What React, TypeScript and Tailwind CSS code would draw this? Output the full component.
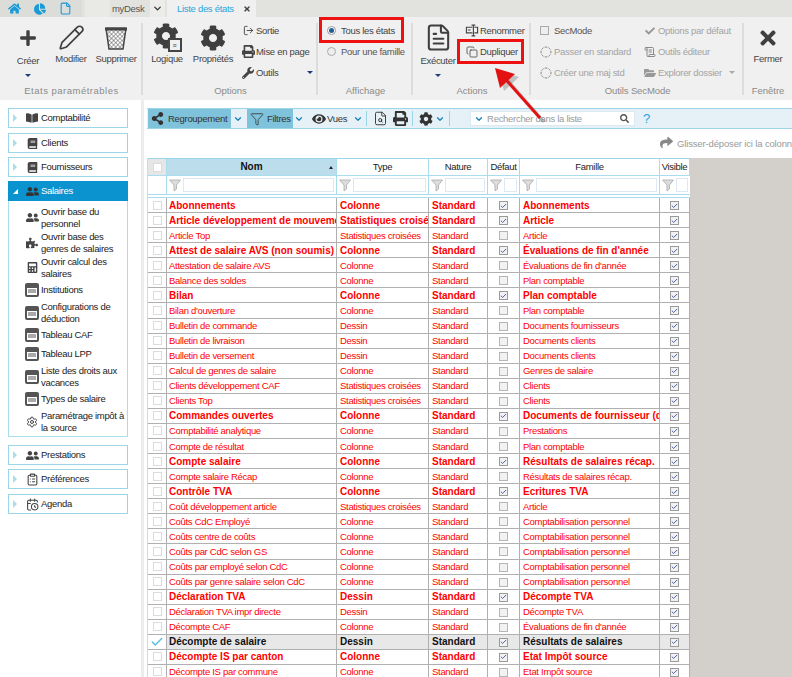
import React from "react";
import { FaHome, FaChartPie, FaPlus, FaCog, FaPrint, FaWrench, FaCheck, FaFolderOpen, FaTimes, FaBookOpen, FaBook, FaUserFriends, FaPuzzlePiece, FaCalculator, FaEye, FaSearch, FaShareAlt, FaShare } from "react-icons/fa";
import { File, Pencil, FileText, Copy, CircleDashed, ScrollText, LogOut, ClipboardList, CalendarClock, ChevronDown, Filter, FileSearch, Check, Settings } from "lucide-react";

type Row = [string, string, boolean, string, boolean?];
const C = "Colonne", D = "Dessin", S = "Statistiques croisées";
const rows: Row[] = [
  ["Abonnements", C, true, "Abonnements"],
  ["Article développement de mouvements", S, true, "Article"],
  ["Article Top", S, false, "Article"],
  ["Attest de salaire AVS (non soumis)", C, true, "Évaluations de fin d'année"],
  ["Attestation de salaire AVS", C, false, "Évaluations de fin d'année"],
  ["Balance des soldes", C, false, "Plan comptable"],
  ["Bilan", C, true, "Plan comptable"],
  ["Bilan d'ouverture", C, false, "Plan comptable"],
  ["Bulletin de commande", D, false, "Documents fournisseurs"],
  ["Bulletin de livraison", D, false, "Documents clients"],
  ["Bulletin de versement", D, false, "Documents clients"],
  ["Calcul de genres de salaire", C, false, "Genres de salaire"],
  ["Clients développement CAF", S, false, "Clients"],
  ["Clients Top", S, false, "Clients"],
  ["Commandes ouvertes", C, true, "Documents de fournisseur (divers)"],
  ["Comptabilité analytique", C, false, "Prestations"],
  ["Compte de résultat", C, false, "Plan comptable"],
  ["Compte salaire", C, true, "Résultats de salaires récap."],
  ["Compte salaire Récap", C, false, "Résultats de salaires récap."],
  ["Contrôle TVA", C, true, "Ecritures TVA"],
  ["Coût développement article", S, false, "Article"],
  ["Coûts CdC Employé", C, false, "Comptabilisation personnel"],
  ["Coûts centre de coûts", C, false, "Comptabilisation personnel"],
  ["Coûts par CdC selon GS", C, false, "Comptabilisation personnel"],
  ["Coûts par employé selon CdC", C, false, "Comptabilisation personnel"],
  ["Coûts par genre salaire selon CdC", C, false, "Comptabilisation personnel"],
  ["Déclaration TVA", D, true, "Décompte TVA"],
  ["Déclaration TVA impr directe", D, false, "Décompte TVA"],
  ["Décompte CAF", C, false, "Évaluations de fin d'année"],
  ["Décompte de salaire", D, true, "Résultats de salaires", true],
  ["Décompte IS par canton", C, true, "Etat Impôt source"],
  ["Décompte IS par commune", C, false, "Etat Impôt source"],
];

function Caret({ color = "border-t-[#1f3a7a]" }: { color?: string }) {
  return <span className={`inline-block w-0 h-0 border-l-[3.5px] border-r-[3.5px] border-t-[3.5px] border-l-transparent border-r-transparent ${color}`} />;
}

function Big({ w, icon, label, caret }: { w: string; icon: React.ReactNode; label: string; caret?: boolean }) {
  return (
    <div className={`${w} flex flex-col items-center shrink-0 pt-[6px]`}>
      <div className="h-[29px] flex items-center justify-center text-[#3f3f3f]">{icon}</div>
      <div className={`${caret ? "mt-[2px]" : "mt-0"} h-[13px] leading-[13px] whitespace-nowrap text-[#444]`}>{label}</div>
      {caret && <div className="mt-[7px] leading-[0] flex"><Caret /></div>}
    </div>
  );
}

function Small({ icon, label, grey, right }: { icon: React.ReactNode; label: string; grey?: boolean; right?: React.ReactNode }) {
  return (
    <div className={`h-[21px] flex items-center whitespace-nowrap ${grey ? "text-[#a3a3a3]" : "text-[#444]"}`}>
      <span className="w-[14px] mr-px flex justify-center shrink-0">{icon}</span>
      <span>{label}</span>
      {right}
    </div>
  );
}

function Group({ w, title, children, last, titleCls = "" }: { w: string; title: string; children: React.ReactNode; last?: boolean; titleCls?: string }) {
  return (
    <div className={`${w} shrink-0 flex flex-col relative`}>
      <div className="h-[66px] flex">{children}</div>
      <div className={`text-center text-[#8a8a8a] h-[15px] leading-[15px] ${titleCls}`}>{title}</div>
      {!last && <div className="absolute right-0 top-[6px] bottom-[5px] w-[2px] bg-[#dcdcdc]" />}
    </div>
  );
}

function Trash() {
  return (
    <svg width="26" height="26" viewBox="0 0 26 26">
      <defs>
        <pattern id="mesh" width="3" height="3" patternUnits="userSpaceOnUse" patternTransform="rotate(45)">
          <rect width="3" height="3" fill="#fff" />
          <path d="M0 0H3M0 0V3" stroke="#555" strokeWidth="1" />
        </pattern>
      </defs>
      <path d="M3 3h20l-3 21H6z" fill="url(#mesh)" stroke="#444" strokeWidth="1.5" />
      <path d="M2 3h22v2.5H2z" fill="#444" />
    </svg>
  );
}

function Logic() {
  return (
    <span className="relative block w-[29px] h-[29px]">
      <FaCog size={26} className="absolute left-0 top-0" />
      <span className="absolute right-0 bottom-0 w-[14px] h-[14px] bg-[#f0f0f0] border-2 border-[#444] flex items-center justify-center text-[7px] leading-none font-bold">≡</span>
    </span>
  );
}

function Rename() {
  return (
    <svg width="15" height="13" viewBox="0 0 15 13" fill="none" stroke="#444" strokeWidth="1.2">
      <path d="M8 3H1.5v6H8M10 3h3.5v6H10" />
      <path d="M3 6h3M9 1v11M7 .8h4M7 12.2h4" />
    </svg>
  );
}

function Box({ checked, faint }: { checked?: boolean; faint?: boolean }) {
  return (
    <span className={`w-[9px] h-[9px] border flex items-center justify-center shrink-0 ${checked ? "border-[#9a9a9a] bg-[#f2f2f2]" : faint ? "border-[#dcdcdc] bg-white" : "border-[#b5b5b5] bg-[#f2f2f2]"}`}>
      {checked && <Check size={8} strokeWidth={3} className="text-[#3b4d9e]" />}
    </span>
  );
}

function WinIcon() {
  return (
    <span className="w-[14px] h-[14px] border-2 border-[#555] rounded-[2px] bg-white flex flex-col">
      <span className="h-[3px] bg-[#555]" />
      <span className="mt-px mx-px h-[4px] bg-[#aaa]" />
    </span>
  );
}

function NavHead({ label, icon, cls = "" }: { label: string; icon: React.ReactNode; cls?: string }) {
  return (
    <div className={`h-[20px] border border-[#9ad6e8] bg-white flex items-center text-[#222] ${cls}`}>
      <span className="ml-[4px] w-0 h-0 border-y-[4px] border-y-transparent border-l-[4px] border-l-[#a9dcec]" />
      <span className="ml-[7px] w-[16px] flex justify-center text-[#444]">{icon}</span>
      <span className="ml-px">{label}</span>
    </div>
  );
}

function NavItem({ h, icon, label }: { h: string; icon: React.ReactNode; label: React.ReactNode }) {
  return (
    <div className={`${h} flex items-center text-[#222] pl-[14px]`}>
      <span className="w-[18px] flex justify-center text-[#444] shrink-0">{icon}</span>
      <span className="leading-[11.5px] whitespace-nowrap">{label}</span>
    </div>
  );
}

function ColFilter({ w, last }: { w: string; last?: boolean }) {
  return (
    <div className={`${w} shrink-0 flex items-center px-[2px] ${last ? "" : "border-r border-[#a9dcec]"}`}>
      <svg width="13" height="13" viewBox="0 0 13 13" className="shrink-0">
        <path d="M.5 1h11L7.5 6v4L5 12V6z" fill="#ddd" stroke="#aaa" strokeWidth=".8" />
      </svg>
      <span className="ml-px flex-1 min-w-0 h-[14px] border border-[#dce9f5] bg-white" />
    </div>
  );
}

function Head({ w, label, active }: { w: string; label: string; active?: boolean }) {
  return (
    <div className={`${w} shrink-0 flex items-center justify-center relative border-r border-[#a9dcec] ${active ? "bg-[#bcdeec] font-bold text-[#111] text-[10px] tracking-normal" : "bg-white text-[#222]"}`}>
      {label}
      {active && <span className="absolute right-[3px] top-[7px] w-0 h-0 border-x-[2.5px] border-x-transparent border-b-[3px] border-b-[#222]" />}
    </div>
  );
}

const cell = "shrink-0 overflow-hidden whitespace-nowrap border-r border-[#b0b0b0] flex items-center";

function ToolDrop() {
  return <ChevronDown size={10} strokeWidth={3} className="text-[#1583b8]" />;
}

export default function App() {
  return (
    <div className="w-[792px] h-[677px] overflow-hidden relative bg-white text-[9.5px] tracking-[-0.3px] leading-[12px]" style={{ fontFamily: '"Liberation Sans", Arial, sans-serif' }}>
      {/* Onglets */}
      <div className="h-[17px] bg-[#e2e2de] flex items-center">
        <div className="w-[82px] h-full flex items-center bg-[#dcdcd8]">
          <FaHome size={13} className="ml-[8px] text-[#1a9ad6]" />
          <FaChartPie size={12} className="ml-[13px] text-[#1a9ad6]" />
          <File size={13} className="ml-[13px] text-[#1a9ad6]" strokeWidth={2} />
        </div>
        <div className="w-[25px] h-full bg-[#e9e9e6] ml-[3px]" />
        <div className="w-[40px] h-full flex items-center pl-[2px] text-[#555] whitespace-nowrap">myDesk</div>
        <div className="w-[15px] h-full bg-[#ececea] flex items-center justify-center"><ChevronDown size={11} strokeWidth={3} className="text-[#333]" /></div>
        <div className="ml-[2px] w-[89px] h-full bg-[#f0f0f0] flex items-center pl-[10px] text-[#2aa5dc] whitespace-nowrap">
          Liste des états
          <FaTimes size={8} className="ml-auto mr-[5px] text-[#444]" />
        </div>
      </div>

      {/* Ruban */}
      <div className="h-[83px] bg-[#f0f0f0] flex">
        <Group w="w-[143px]" title="Etats paramétrables" titleCls="tracking-[0.5px]">
          <div className="w-[6px]" />
          <Big w="w-[44px]" icon={<FaPlus size={18} />} label="Créer" caret />
          <Big w="w-[42px]" icon={<Pencil size={27} strokeWidth={1.5} />} label="Modifier" />
          <Big w="w-[48px]" icon={<Trash />} label="Supprimer" />
        </Group>
        <Group w="w-[175px]" title="Options" titleCls="tracking-normal">
          <Big w="w-[48px]" icon={<Logic />} label="Logique" />
          <Big w="w-[44px]" icon={<FaCog size={26} />} label="Propriétés" />
          <div className="ml-[6px] pt-[3px] flex flex-col w-[72px] shrink-0">
            <Small icon={<LogOut size={11} strokeWidth={2} />} label="Sortie" />
            <Small icon={<FaPrint size={13} />} label="Mise en page" />
            <Small icon={<FaWrench size={12} />} label="Outils" right={<span className="ml-auto flex"><Caret /></span>} />
          </div>
        </Group>
        <Group w="w-[95px]" title="Affichage" titleCls="tracking-normal">
          <div className="pl-[9px] pt-[3px] flex flex-col">
            <div className="h-[21px] flex items-center text-[#444] whitespace-nowrap">
              <span className="w-[9px] h-[9px] rounded-full border border-[#999] bg-white flex items-center justify-center mr-[5px]"><span className="w-[5px] h-[5px] rounded-full bg-[#1f5f99]" /></span>
              Tous les états
            </div>
            <div className="h-[21px] flex items-center text-[#555] whitespace-nowrap">
              <span className="w-[9px] h-[9px] rounded-full border border-[#aaa] bg-[#eee] mr-[5px]" />
              Pour une famille
            </div>
          </div>
        </Group>
        <Group w="w-[118px]" title="Actions" titleCls="tracking-normal">
          <Big w="w-[50px]" icon={<FileText size={29} strokeWidth={1.7} />} label="Exécuter" caret />
          <div className="pl-[2px] pt-[3px] flex flex-col">
            <Small icon={<Rename />} label="Renommer" />
            <div className="h-[21px] flex items-center whitespace-nowrap text-[#444]">
              <span className="w-[14px] mr-px flex justify-center shrink-0"><Copy size={12} strokeWidth={1.6} /></span>
              Dupliquer
            </div>
          </div>
        </Group>
        <Group w="w-[213px]" title="Outils SecMode" titleCls="tracking-[-0.1px]">
          <div className="pl-[8px] pt-[3px] w-[112px] shrink-0 flex flex-col">
            <div className="h-[21px] flex items-center text-[#555]"><span className="w-[9px] h-[9px] border border-[#aaa] bg-[#eee] mr-[5px] ml-px" />SecMode</div>
            <Small grey icon={<CircleDashed size={12} className="text-[#888]" />} label="Passer en standard" />
            <Small grey icon={<CircleDashed size={12} className="text-[#888]" />} label="Créer une maj std" />
          </div>
          <div className="pt-[3px] flex flex-col">
            <Small grey icon={<FaCheck size={10} className="text-[#999]" />} label="Options par défaut" />
            <Small grey icon={<ScrollText size={12} className="text-[#888]" />} label="Outils éditeur" />
            <Small grey icon={<FaFolderOpen size={12} className="text-[#999]" />} label="Explorer dossier" right={<span className="ml-[7px] flex"><Caret color="border-t-[#aaa]" /></span>} />
          </div>
        </Group>
        <Group w="w-[48px]" title="Fenêtre" last titleCls="tracking-normal">
          <Big w="w-[48px]" icon={<FaTimes size={22} />} label="Fermer" />
        </Group>
      </div>

      <div className="flex h-[577px]">
        {/* Navigation */}
        <div className="w-[141px] shrink-0 pl-[8px] pr-[13px] pt-[8px] flex flex-col">
          <NavHead label="Comptabilité" icon={<FaBookOpen size={12} />} />
          <NavHead cls="mt-[5px]" label="Clients" icon={<FaBook size={11} />} />
          <NavHead cls="mt-[4px]" label="Fournisseurs" icon={<FaBook size={11} />} />
          <div className="mt-[4px] h-[20px] bg-[#0a93cf] flex items-center text-white">
            <span className="ml-[5px] w-0 h-0 border-t-[5px] border-t-transparent border-r-[5px] border-r-white" />
            <span className="ml-[6px] w-[16px] flex justify-center text-[#333]"><FaUserFriends size={13} /></span>
            <span className="ml-px">Salaires</span>
          </div>
          <div className="h-[236px] border border-t-0 border-[#a9dcec] pt-[4px]">
            <NavItem h="h-[25px]" icon={<FaUserFriends size={13} />} label={<>Ouvrir base du<br />personnel</>} />
            <NavItem h="h-[25px]" icon={<FaPuzzlePiece size={12} />} label={<>Ouvrir base des<br />genres de salaires</>} />
            <NavItem h="h-[25px]" icon={<FaCalculator size={11} />} label={<>Ouvrir calcul des<br />salaires</>} />
            <NavItem h="h-[20px]" icon={<WinIcon />} label="Institutions" />
            <NavItem h="h-[25px]" icon={<WinIcon />} label={<>Configurations de<br />déduction</>} />
            <NavItem h="h-[19px]" icon={<WinIcon />} label="Tableau CAF" />
            <NavItem h="h-[20px]" icon={<WinIcon />} label="Tableau LPP" />
            <NavItem h="h-[25px]" icon={<WinIcon />} label={<>Liste des droits aux<br />vacances</>} />
            <NavItem h="h-[20px]" icon={<WinIcon />} label="Types de salaire" />
            <NavItem h="h-[25px]" icon={<Settings size={12} />} label={<>Paramétrage impôt à<br />la source</>} />
          </div>
          <NavHead cls="mt-[8px]" label="Prestations" icon={<FaUserFriends size={13} />} />
          <NavHead cls="mt-[4px]" label="Préférences" icon={<ClipboardList size={13} />} />
          <NavHead cls="mt-[5px]" label="Agenda" icon={<CalendarClock size={13} />} />
        </div>
        <div className="w-[3px] shrink-0 bg-[#ececec]" />

        {/* Contenu */}
        <div className="flex-1 min-w-0 flex flex-col pl-[3px] pt-[8px]">
          <div className="h-[21px] bg-[#e5f1f7] border-y border-[#9ad6e8] flex items-center text-[#333] pl-px">
            <div className="h-full w-[83px] bg-[#7fc2dc] flex items-center pl-[3px] whitespace-nowrap">
              <FaShareAlt size={13} className="text-[#333] mr-[4px]" />Regroupement
            </div>
            <span className="ml-[2px] w-[10px] flex"><ToolDrop /></span>
            <div className="ml-[4px] h-full w-[46px] bg-[#7fc2dc] flex items-center pl-[3px]">
              <Filter size={14} strokeWidth={1.4} className="mr-[3px]" />Filtres
            </div>
            <span className="ml-px w-[10px] flex"><ToolDrop /></span>
            <FaEye size={14} className="ml-[8px] mr-px" />Vues
            <span className="ml-[6px] w-[10px] flex"><ToolDrop /></span>
            <span className="ml-[3px] w-px h-[15px] bg-[#9ad6e8]" />
            <FileSearch size={15} strokeWidth={1.5} className="ml-[6px]" />
            <FaPrint size={15} className="ml-[5px]" />
            <span className="ml-[4px] w-px h-[15px] bg-[#9ad6e8]" />
            <FaCog size={14} className="ml-[6px]" />
            <span className="ml-[2px] w-[10px] flex"><ToolDrop /></span>
            <span className="ml-[4px] w-px h-[15px] bg-[#9ad6e8]" />
            <div className="ml-[20px] w-[165px] h-[15px] bg-white border border-[#dcebf3] flex items-center text-[#9a9a9a] pl-[3px] whitespace-nowrap">
              <span className="w-[10px] flex mr-[3px]"><ToolDrop /></span>
              Rechercher dans la liste
              <FaSearch size={9} className="ml-auto mr-[5px] text-[#555]" />
            </div>
            <span className="ml-[8px] text-[#2aa5dc] text-[13px] leading-none">?</span>
          </div>
          <div className="h-[29px] flex items-end justify-end pb-[8px] text-[#999] whitespace-nowrap overflow-hidden tracking-[-0.15px]">
            <FaShare size={13} className="text-[#888] mr-[4px] mb-px" />
            <span className="w-[115px] overflow-hidden">Glisser-déposer ici la colonne</span>
          </div>

          <div className="flex-1 flex min-h-0 border-l border-[#b9e3f0]">
            <div className="w-[542px] shrink-0 flex flex-col">
              <div className="h-[17px] flex border-t border-[#9ad6e8] shrink-0">
                <div className="w-[19px] shrink-0 bg-[#e6e6e6] flex items-center justify-center border-r border-[#a9dcec]"><Box faint /></div>
                <Head w="w-[170px]" label="Nom" active />
                <Head w="w-[92px]" label="Type" />
                <Head w="w-[59px]" label="Nature" />
                <Head w="w-[32px]" label="Défaut" />
                <Head w="w-[140px]" label="Famille" />
                <Head w="w-[30px]" label="Visible" />
              </div>
              <div className="h-[19px] flex shrink-0 border-t border-[#a9dcec]">
                <div className="w-[19px] shrink-0 border-r border-[#a9dcec]" />
                <ColFilter w="w-[170px]" />
                <ColFilter w="w-[92px]" />
                <ColFilter w="w-[59px]" />
                <ColFilter w="w-[32px]" />
                <ColFilter w="w-[140px]" />
                <ColFilter w="w-[30px]" last />
              </div>
              <div className="h-[4px] border-y border-[#a9dcec] shrink-0" />
              <div className="overflow-hidden">
                {rows.map(([name, type, def, fam, sel]) => {
                  const color = sel ? "text-[#111] bg-[#e8e8e8]" : "text-[#ff0000]";
                  const weight = def ? "font-bold text-[10px] tracking-normal" : "";
                  return (
                    <div key={name} className={`h-[15.07px] flex border-b border-[#b0b0b0] ${color} ${weight}`}>
                      <div className={`${cell} w-[19px] justify-center bg-white`}>
                        {sel ? <Check size={14} strokeWidth={2.5} className="text-[#59bfe0]" /> : <Box faint />}
                      </div>
                      <div className={`${cell} w-[170px] pl-[2px] pt-px`}>{name}</div>
                      <div className={`${cell} w-[92px] pl-[3px] pt-px`}>{type}</div>
                      <div className={`${cell} w-[59px] pl-[3px] pt-px`}>Standard</div>
                      <div className={`${cell} w-[32px] justify-center pt-px`}><Box checked={def} /></div>
                      <div className={`${cell} w-[140px] pl-[3px] pt-px`}>{fam}</div>
                      <div className={`${cell} w-[30px] justify-center pt-px`}><Box checked /></div>
                    </div>
                  );
                })}
              </div>
            </div>
            <div className="flex-1 bg-[#d3d0cb]" />
          </div>
        </div>
      </div>

      {/* Annotations */}
      <div className="absolute left-[319px] top-[17px] w-[85px] h-[26px] border-[3px] border-[#ee1111]" />
      <div className="absolute left-[457px] top-[39px] w-[67px] h-[25px] border-[3px] border-[#ee1111]" />
      <svg className="absolute left-[480px] top-[60px]" width="80" height="75" viewBox="0 0 80 75">
        <path d="M64 62 L24 16" fill="none" stroke="#555" strokeOpacity=".35" strokeWidth="3" />
        <path d="M19 11l20 6-15 14z" fill="#555" fillOpacity=".3" />
        <path d="M60 58 L21 14" fill="none" stroke="#e31212" strokeWidth="3" />
        <path d="M15 8l20 6-15 14z" fill="#e31212" />
      </svg>
    </div>
  );
}
